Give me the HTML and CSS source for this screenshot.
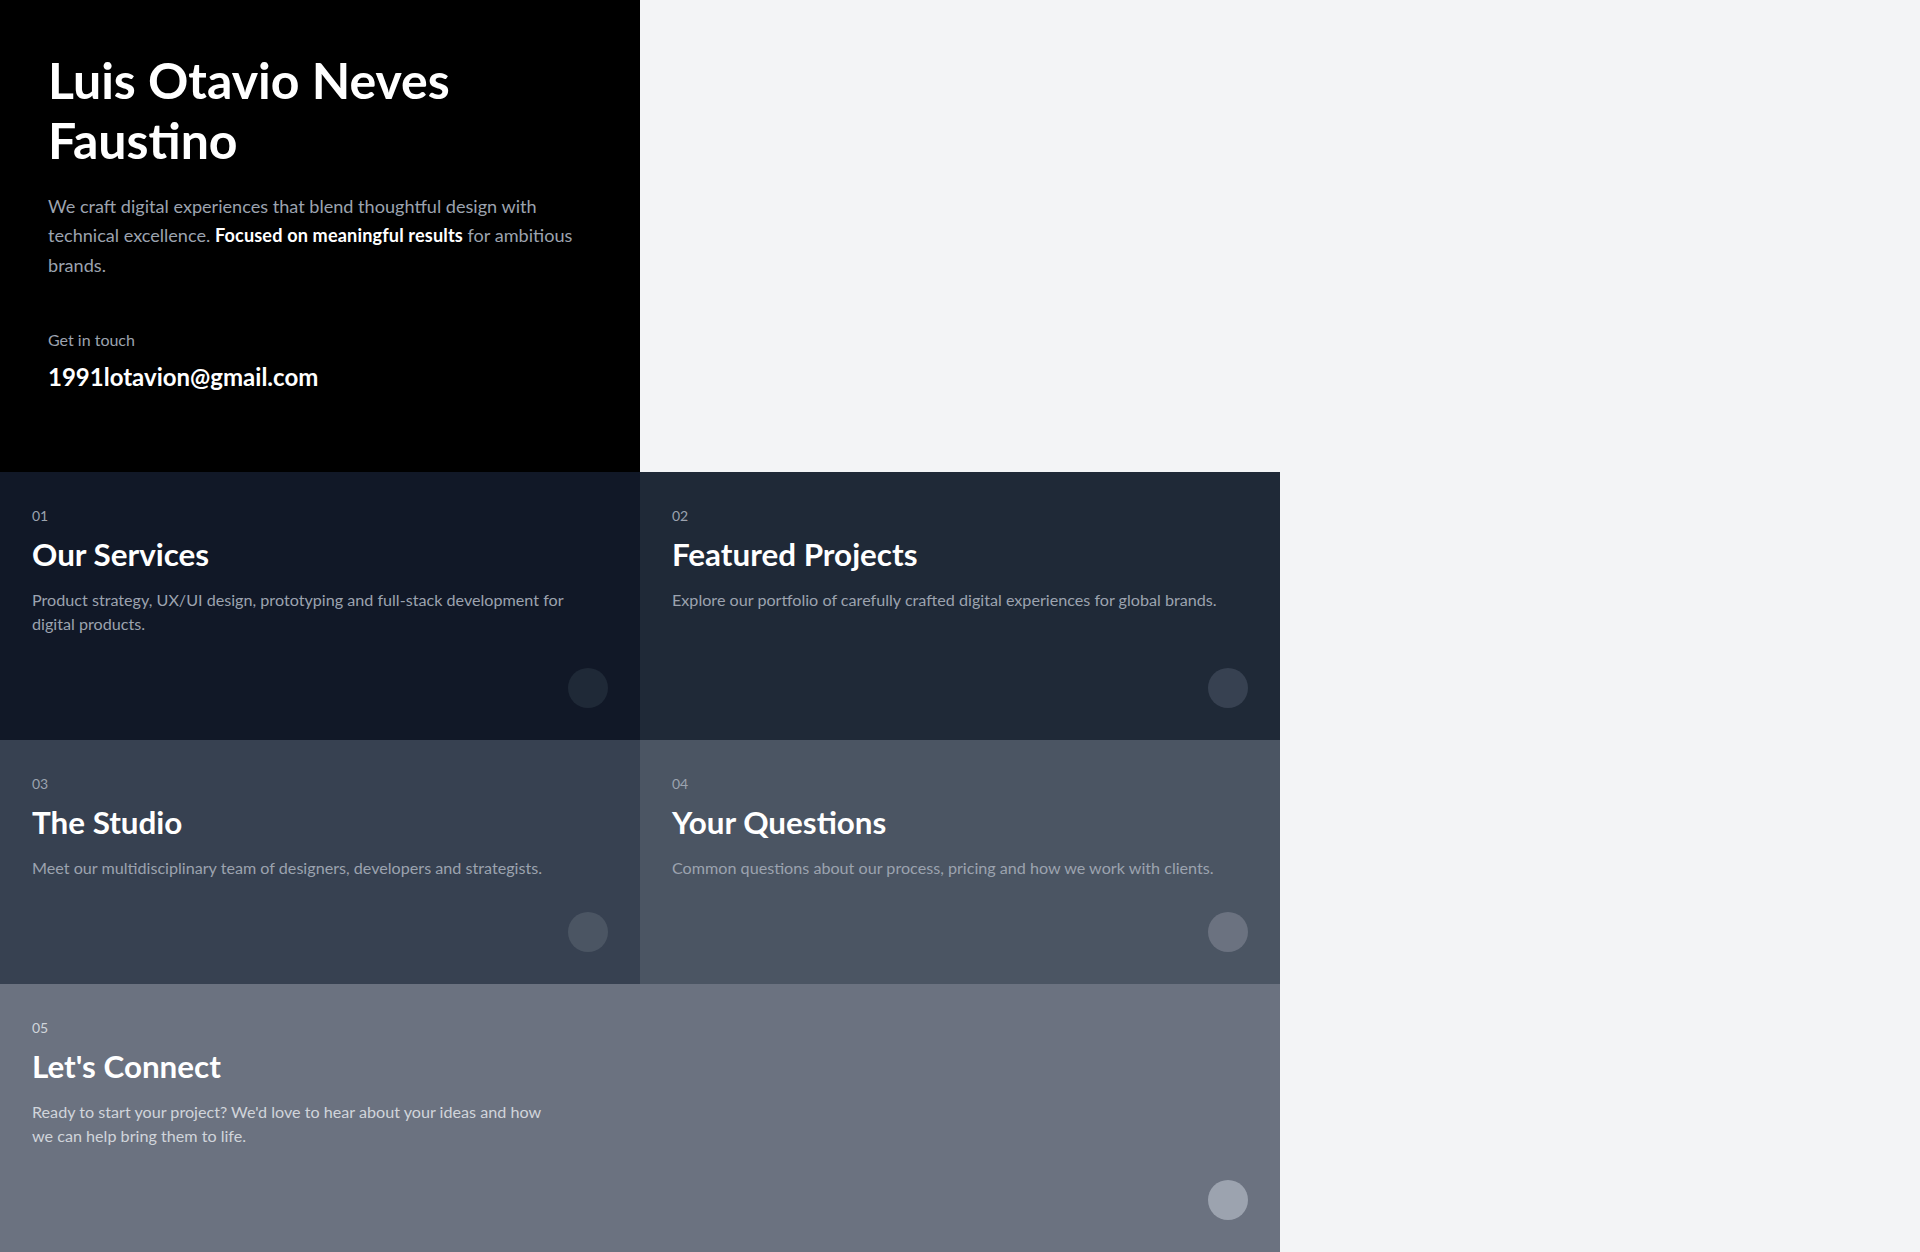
FILE: index.html
```html
<!DOCTYPE html>
<html lang="en">
<head>
<meta charset="utf-8">
<title>Luis Otavio Neves Faustino</title>
<link rel="stylesheet" href="styles.css">
</head>
<body>
<main class="page">
  <header class="hero">
    <h1 class="hero-title">Luis Otavio Neves Faustino</h1>
    <p class="hero-text">We craft digital experiences that blend thoughtful design with technical excellence. <strong>Focused on meaningful results</strong> for ambitious brands.</p>
    <div class="contact">
      <span class="contact-label">Get in touch</span>
      <a class="contact-email" href="mailto:1991lotavion@gmail.com">1991lotavion@gmail.com</a>
    </div>
  </header>
  <section class="grid">
    <article class="card card-1">
      <span class="card-num">01</span>
      <h2 class="card-title">Our Services</h2>
      <p class="card-text">Product strategy, UX/UI design, prototyping and full-stack development for digital products.</p>
      <span class="card-dot"></span>
    </article>
    <article class="card card-2">
      <span class="card-num">02</span>
      <h2 class="card-title">Featured Projects</h2>
      <p class="card-text">Explore our portfolio of carefully crafted digital experiences for global brands.</p>
      <span class="card-dot"></span>
    </article>
    <article class="card card-3">
      <span class="card-num">03</span>
      <h2 class="card-title">The Studio</h2>
      <p class="card-text">Meet our multidisciplinary team of designers, developers and strategists.</p>
      <span class="card-dot"></span>
    </article>
    <article class="card card-4">
      <span class="card-num">04</span>
      <h2 class="card-title">Your Questions</h2>
      <p class="card-text">Common questions about our process, pricing and how we work with clients.</p>
      <span class="card-dot"></span>
    </article>
    <article class="card card-5">
      <span class="card-num">05</span>
      <h2 class="card-title">Let's Connect</h2>
      <p class="card-text">Ready to start your project? We'd love to hear about your ideas and how we can help bring them to life.</p>
      <span class="card-dot"></span>
    </article>
  </section>
</main>
</body>
</html>
```
FILE: styles.css
```css
* { box-sizing: border-box; }

html, body {
  margin: 0;
  padding: 0;
}

body {
  background: #f3f4f6;
  font-family: "Lato", "Roboto", sans-serif;
  color: #ffffff;
  -webkit-font-smoothing: antialiased;
}

.page {
  width: 1280px;
  display: flex;
  flex-direction: column;
}

/* Hero */
.hero {
  width: 640px;
  min-height: 472px;
  background: #000000;
  padding: 50px 48px 70px;
  display: flex;
  flex-direction: column;
}

.hero-title {
  margin: 0;
  font-size: 50px;
  line-height: 60px;
  font-weight: 700;
  color: #ffffff;
}

.hero-text {
  margin: 22px 0 0;
  font-size: 18.1px;
  line-height: 29.25px;
  color: #9ca3af;
  max-width: 544px;
}

.hero-text strong {
  color: #ffffff;
  font-weight: 700;
  letter-spacing: 0.15px;
}

.contact {
  margin-top: 48px;
  display: flex;
  flex-direction: column;
  gap: 9px;
}

.contact-label {
  font-size: 16px;
  line-height: 24px;
  color: #9ca3af;
}

.contact-email {
  font-size: 24px;
  line-height: 32px;
  font-weight: 700;
  color: #ffffff;
  text-decoration: none;
}

/* Grid */
.grid {
  display: grid;
  grid-template-columns: 640px 640px;
}

.card {
  padding: 32px;
  display: flex;
  flex-direction: column;
}

.card-num {
  font-size: 14px;
  line-height: 24px;
  color: #9ca3af;
}

.card-title {
  margin: 8px 0 0;
  font-size: 31.4px;
  line-height: 36px;
  font-weight: 700;
  color: #ffffff;
}

.card-text {
  margin: 16px 0 32px;
  font-size: 16.15px;
  line-height: 24px;
  color: #9ca3af;
  max-width: 560px;
}

.card-dot {
  margin-top: auto;
  align-self: flex-end;
  width: 40px;
  height: 40px;
  border-radius: 50%;
}

.card-1 { background: #111827; }
.card-1 .card-dot { background: #1f2937; }

.card-2 { background: #1f2937; }
.card-2 .card-dot { background: #374151; }

.card-3 { background: #374151; }
.card-3 .card-dot { background: #4b5563; }

.card-4 { background: #4b5563; }
.card-4 .card-dot { background: #6b7280; }

.card-5 {
  grid-column: 1 / span 2;
  background: #6b7280;
}
.card-5 .card-num { color: #d1d5db; }
.card-5 .card-text { color: #d1d5db; max-width: 520px; }
.card-5 .card-dot { background: #9ca3af; }
```
